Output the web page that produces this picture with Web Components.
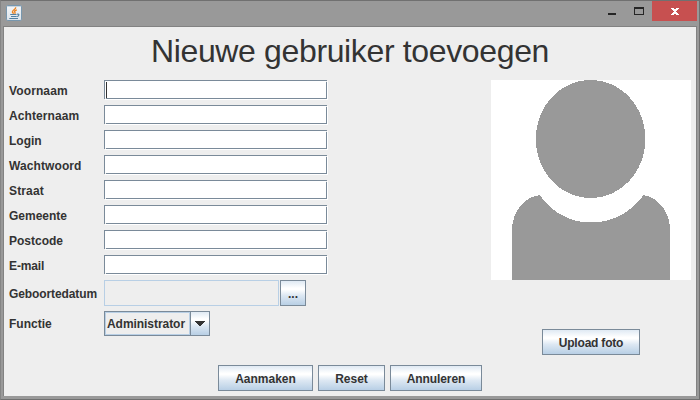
<!DOCTYPE html>
<html lang="nl">
<head>
<meta charset="utf-8">
<title>Nieuwe gebruiker toevoegen</title>
<style>
html, body { margin: 0; width: 700px; height: 400px; overflow: hidden; }
body { font: bold 12px "Liberation Sans", Arial, sans-serif; color: #333; }
</style>
</head>
<body>
<app-window>
  <user-form></user-form>
</app-window>
<script>
const define = (name, html) => customElements.define(name, class extends HTMLElement {
  constructor() {
    super();
    this.attachShadow({ mode: 'open' }).innerHTML = html;
  }
});

define('java-icon', `
<style>:host{display:block;width:16px;height:16px}svg{display:block}</style>
<svg width="16" height="16" viewBox="0 0 16 16">
  <defs><linearGradient id="g" x2="0" y2="1"><stop stop-color="#f4f6f8"/><stop offset="1" stop-color="#dce4ec"/></linearGradient></defs>
  <rect x=".5" y=".5" width="15" height="15" rx="1.3" fill="url(#g)" stroke="#7897ae"/>
  <path d="M1 1h14v1H1z" fill="#c9d5df"/>
  <path d="M9.600 2.300C10.500 4.200 6.200 5 6.400 6.800c.1.9.8 1.200 1.200 2M10.800 4.800C8.900 5.500 8 6.400 8.900 7.400c.4.5.1 1-.3 1.300" fill="none" stroke="#ec8320" stroke-width="1.4"/>
  <path d="M4.200 9.500h6.300M5 11.500h5.500M3.300 13.500h8.700M11 9.300c2.900-.9 2.200 2-.2 2.200" fill="none" stroke="#5380a1" stroke-width="1.200"/>
</svg>`);

define('window-controls', `
<style>
:host{display:flex;height:20px}
svg{display:block}
</style>
<svg width="92" height="20" viewBox="0 0 92 20" shape-rendering="crispEdges">
  <path d="M3 12h8v2H3z" fill="#252525"/>
  <path fill-rule="evenodd" d="M29 6h10v8H29zM30 8v5h8V8z" fill="#252525"/>
  <path d="M47 0h45v20H47z" fill="#c75050"/>
  <path fill="#fff" d="M66 7h3v1h2v-1h3v1h-1v1h-1v1h-1v1h1v1h1v1h1v1h-3v-1h-2v1h-3v-1h1v-1h1v-1h1v-1h-1v-1h-1v-1h-1z"/>
</svg>`);

define('app-window', `
<style>
:host{box-sizing:border-box;display:flex;flex-direction:column;width:700px;height:400px;background:#999;border:1px solid #707070;border-left-color:#858585;padding:0 2px 3px}
header{display:flex;justify-content:space-between;height:25px;flex:none}
java-icon{margin:4px 0 0 3px}
main{flex:1;background:#eee;border:1px solid #828282;border-bottom:0;min-height:0}
</style>
<header><java-icon></java-icon><window-controls></window-controls></header>
<main><slot></slot></main>`);

define('metal-input', `
<style>
:host{display:block;width:224px;height:20px;background:
 linear-gradient(#eee,#eee) 0 19px/1px 1px no-repeat,
 linear-gradient(#eee,#eee) 1px 18px/1px 1px no-repeat,
 linear-gradient(#eee,#eee) 223px 0/1px 1px no-repeat,
 linear-gradient(#eee,#eee) 222px 1px/1px 1px no-repeat,
 linear-gradient(#7a8a99,#7a8a99) 0 0/223px 1px no-repeat,
 linear-gradient(#7a8a99,#7a8a99) 0 0/1px 19px no-repeat,
 linear-gradient(#7a8a99,#7a8a99) 0 18px/223px 1px no-repeat,
 linear-gradient(#7a8a99,#7a8a99) 222px 0/1px 19px no-repeat,#fff}
i{display:none;width:1px;height:16px;background:#333}
:host([focused]){box-sizing:border-box;padding:2px}
:host([focused]) i{display:block}
</style><i></i>`);

define('metal-button', `
<style>
:host{box-sizing:border-box;display:flex;align-items:center;justify-content:center;height:26px;border:1px solid #7a8a99;
background:linear-gradient(#dfe9f3 0,#fff 30%,#fff 36%,#dde8f3 60%,#b8cfe5 100%);white-space:nowrap;padding-top:1px}
</style><slot></slot>`);

define('metal-combo', `
<style>
:host{box-sizing:border-box;display:flex;width:106px;height:25px;border:1px solid #7a8a99}
span{box-sizing:border-box;width:85px;border:1px solid #b8cfe5;padding-left:1px;line-height:22px;white-space:nowrap;letter-spacing:-.05px}
b{flex:1;display:flex;align-items:center;justify-content:center;border-left:1px solid #7a8a99;background:linear-gradient(#dfe9f3 0,#fff 30%,#fff 36%,#dde8f3 60%,#b8cfe5 100%)}
</style><span><slot></slot></span><b><svg width="10" height="5" shape-rendering="crispEdges"><path d="M0 0h10v1H9v1H8v1H7v1H6v1H4V4H3V3H2V2H1V1H0z" fill="#333"/></svg></b>`);

define('form-row', `
<style>
:host{display:flex;align-items:center;height:20px}
span{width:95px;flex:none;white-space:nowrap;padding-top:1px;letter-spacing:var(--track,0)}
</style><span><slot name="label"></slot></span><slot></slot>`);

define('date-field', `
<style>
:host{display:flex;gap:1px}
i{box-sizing:border-box;width:175px;height:26px;border:1px solid #b8cfe5}
metal-button{width:26px}
</style><i></i><metal-button>...</metal-button>`);

define('photo-placeholder', `
<style>:host{display:block;width:200px;height:200px;background:#fff}svg{display:block}</style>
<svg width="200" height="200" shape-rendering="crispEdges" fill="#999">
<ellipse cx="99.600" cy="59" rx="54.800" ry="59"/>
<path d="M21 200V150C21 132 33 117 48.700 115C60 132 79 142.500 100 142.500S141 132 152.500 115C168 118 179 132 179 150V200z"/>
</svg>`);

const fields = [
  ['Voornaam', .12], ['Achternaam', .1], ['Login', 0], ['Wachtwoord', .1],
  ['Straat', .15], ['Gemeente', 0], ['Postcode', 0], ['E-mail', -.12]
];

define('user-form', `
<style>
:host{display:flex;flex-direction:column;height:100%}
h1{margin:0;height:53px;line-height:49px;font-size:32px;font-weight:400;text-align:center;white-space:nowrap;letter-spacing:-.36px}
.body{display:flex;justify-content:space-between;padding:0 5px}
.rows{display:flex;flex-direction:column;gap:5px}
.date{height:26px;--track:-.1px}
.role{height:25px}
.photo{display:flex;flex-direction:column;align-items:center;gap:49px}
.actions{display:flex;justify-content:center;gap:5px;margin-top:10px}
</style>
<h1>Nieuwe gebruiker toevoegen</h1>
<div class="body">
  <div class="rows">
    ${fields.map(([t, track], i) =>
      `<form-row style="--track:${track}px"><span slot="label">${t}</span><metal-input ${i ? '' : 'focused'}></metal-input></form-row>`).join('')}
    <form-row class="date"><span slot="label">Geboortedatum</span><date-field></date-field></form-row>
    <form-row class="role"><span slot="label">Functie</span><metal-combo>Administrator</metal-combo></form-row>
  </div>
  <div class="photo">
    <photo-placeholder></photo-placeholder>
    <metal-button style="width:98px;letter-spacing:-.2px">Upload foto</metal-button>
  </div>
</div>
<div class="actions">
  <metal-button style="width:95px">Aanmaken</metal-button>
  <metal-button style="width:67px">Reset</metal-button>
  <metal-button style="width:92px;letter-spacing:-.1px">Annuleren</metal-button>
</div>`);
</script>
</body>
</html>
